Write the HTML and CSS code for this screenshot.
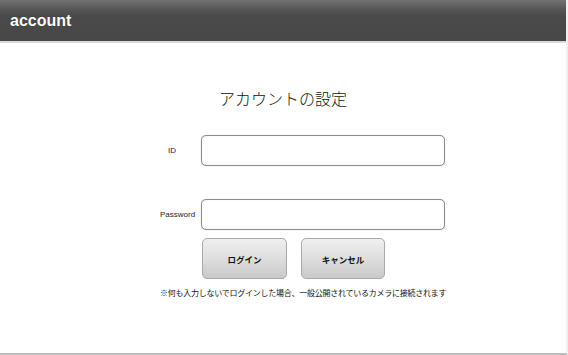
FILE: index.html
```html
<!DOCTYPE html>
<html lang="ja">
<head>
  <meta charset="utf-8" />
  <title>account</title>
  <link rel="stylesheet" href="styles.css">
</head>
<body>
  <div class="page">
    <header class="topbar">
      <h1>account</h1>
    </header>

    <h2 class="title">アカウントの設定</h2>

    <form class="login" onsubmit="return false;">
      <div class="row row-id">
        <label class="label label-id" for="uid">ID</label>
        <input class="field" id="uid" type="text" />
      </div>
      <div class="row row-pw">
        <label class="label" for="pw">Password</label>
        <input class="field" id="pw" type="password" />
      </div>
      <div class="buttons">
        <button class="btn btn-login" type="submit">ログイン</button>
        <button class="btn btn-cancel" type="button">キャンセル</button>
      </div>
      <p class="note">※何も入力しないでログインした場合、一般公開されているカメラに接続されます</p>
    </form>
  </div>
</body>
</html>
```

FILE: styles.css
```css
html, body { margin: 0; padding: 0; background: #fff; font-family: "Liberation Sans", Arial, "Noto Sans CJK JP", sans-serif; color: #000; }
.page { height: 355px; box-sizing: border-box; border-bottom: 2px solid #bdbdbd; border-right: 2px solid #f0f0f0; overflow: hidden; }

.topbar { height: 41px; background: linear-gradient(to bottom, #727272 0, #575757 9px, #4a4a4a 16px, #474747 100%); border-bottom: 2px solid #dadada; }
.topbar h1 { margin: 0; padding: 0 0 0 10px; font-size: 16px; font-weight: bold; line-height: 41px; color: #fff; text-shadow: 0 0 1px rgba(0,0,0,0.4); }

.title { margin: 47px 0 0; font-family: "Liberation Serif", "Noto Sans CJK JP", serif; font-size: 16px; font-weight: 300; line-height: 20px; text-align: center; color: #111; }

.login { margin: 25px 0 0 160px; width: 290px; }
.row { display: flex; align-items: center; gap: 5px; }
.row-pw { margin-top: 33px; }
.label { width: 36px; font-size: 8px; line-height: 10px; color: #222; white-space: nowrap; }
.label-id { box-sizing: border-box; padding-left: 8px; }
.field { width: 244px; height: 31px; box-sizing: border-box; margin: 0; border: 1px solid #8c8c8c; border-radius: 5px; box-shadow: 0 0 1px #b5b5b5, inset 0 0 1px #ddd; background: #fff; outline: none; }

.buttons { display: flex; gap: 14px; margin: 8px 0 0 42px; }
.btn { width: 84px; height: 41px; margin: 0; padding: 0; border: 1px solid #a9a9a9; border-radius: 5px; background: linear-gradient(to bottom, #f0f0f0 0, #dedede 50%, #c9c9c9 100%); font-family: "Liberation Sans", "Noto Sans CJK JP", sans-serif; font-size: 8.5px; font-weight: bold; color: #111; }
.btn-login { width: 85px; }

.note { margin: 8px 0 0; font-family: "Noto Sans CJK JP", sans-serif; font-size: 8px; line-height: 12px; letter-spacing: -0.25px; white-space: nowrap; color: #111; }
```
